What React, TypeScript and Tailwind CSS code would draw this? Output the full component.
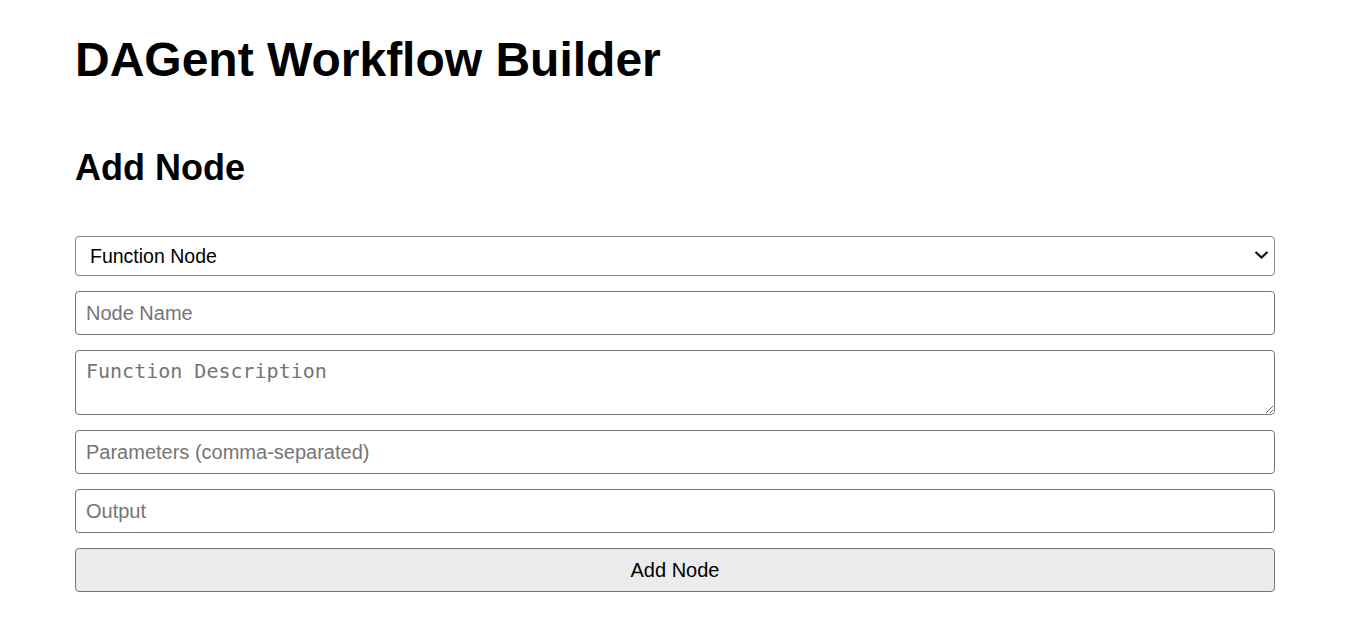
import React, { useState } from "react";

const field =
  "block w-full rounded-[4px] border border-[#767676] bg-white px-[10px] text-[20px] text-black placeholder:text-[#757575] outline-none";

export default function App() {
  const [nodeType, setNodeType] = useState("function");

  return (
    <div className="min-h-screen bg-white font-['Liberation_Sans',Arial,sans-serif] text-black">
      <div className="mx-auto w-[1200px] pt-[32px]">
        <h1 className="text-[48px] font-bold leading-[55px]">DAGent Workflow Builder</h1>

        <h2 className="mt-[60px] text-[36px] font-bold leading-[41px]">Add Node</h2>

        <form className="mt-[48px] flex flex-col gap-[15px]" onSubmit={(e) => e.preventDefault()}>
          <div className="relative">
            <select
              value={nodeType}
              onChange={(e) => setNodeType(e.target.value)}
              className="block h-[40px] w-full appearance-none rounded-[4px] border border-[#858585] bg-white pt-[2px] pl-[14px] pr-10 text-[19.5px] text-black outline-none"
            >
              <option value="function">Function Node</option>
              <option value="llm">LLM Node</option>
            </select>
            <svg
              className="pointer-events-none absolute right-[6px] top-[14px]"
              width="15"
              height="10"
              viewBox="0 0 15 10"
              fill="none"
            >
              <path d="M1.5 2 L7.5 7.5 L13.5 2" stroke="#111" strokeWidth="2.2" />
            </svg>
          </div>

          <input className={`${field} h-[44px]`} placeholder="Node Name" />

          <textarea
            className={`${field} h-[65px] px-[5px] py-[8px] font-['DejaVu_Sans_Mono',monospace] text-[20px] leading-[24px]`}
            placeholder="Function Description"
          />

          <input className={`${field} h-[44px]`} placeholder="Parameters (comma-separated)" />

          <input className={`${field} h-[44px]`} placeholder="Output" />

          <button
            type="submit"
            className="h-[44px] w-full rounded-[4px] border border-[#767676] bg-[#ececec] text-[20px] text-black"
          >
            Add Node
          </button>
        </form>
      </div>
    </div>
  );
}
